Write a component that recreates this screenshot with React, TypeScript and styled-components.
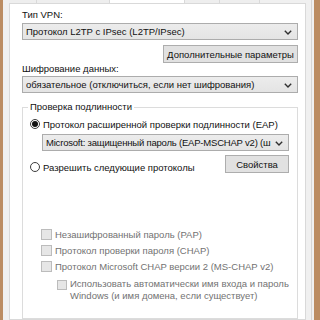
import React from "react";
import styled, { createGlobalStyle } from "styled-components";

const Global = createGlobalStyle`
  html, body { margin: 0; padding: 0; background: #f0f0f0; }
  * { box-sizing: border-box; }
`;

const Root = styled.div`
  display: flex;
  width: 320px;
  height: 320px;
  overflow: hidden;
  background: #f0f0f0;
  font-family: "Liberation Sans", Arial, sans-serif;
  font-size: 9.5px;
  color: #111111;
`;

const Wood = styled.div<{ $w: number }>`
  flex: none;
  width: ${(p) => p.$w}px;
  background: #bb8c62;
`;

const Gap = styled.div<{ $w: number }>`
  flex: none;
  width: ${(p) => p.$w}px;
  background: #f0f0f0;
`;

const Frame = styled.div`
  flex: none;
  width: 309px;
  padding-left: 6px;
  border-right: 1px solid #d6d6d6;
  display: flex;
  flex-direction: column;
`;

const TabStrip = styled.div`
  height: 3px;
  display: flex;
  flex: none;
`;

const Tab = styled.div<{ $w: number; $active?: boolean }>`
  width: ${(p) => p.$w}px;
  flex: none;
  border-right: 1px solid #d9d9d9;
  background: ${(p) => (p.$active ? "#ffffff" : "#eeeeee")};
`;

const TabPage = styled.div`
  width: 297px;
  flex: 1;
  background: #ffffff;
  border: 1px solid #d9d9d9;
  padding: 4px 7px 0 12px;
  display: flex;
  flex-direction: column;
`;

const Label = styled.div<{ $mt?: number }>`
  line-height: 12px;
  height: 13px;
  margin-top: ${(p) => p.$mt ?? 0}px;
  white-space: nowrap;
  padding-top: 1px;
`;

const Combo = styled.div<{ $mt?: number; $ml?: number }>`
  height: 17px;
  margin-top: ${(p) => p.$mt ?? 0}px;
  margin-left: ${(p) => p.$ml ?? 0}px;
  border: 1px solid #acacac;
  background: linear-gradient(#ececec, #e4e4e4);
  display: flex;
  align-items: center;
  padding: 1px 5px 0 3px;
  gap: 3px;
  line-height: 14px;
  min-width: 0;
`;

const ComboText = styled.span<{ $tight?: boolean }>`
  flex: 1;
  min-width: 0;
  white-space: nowrap;
  overflow: hidden;
  letter-spacing: ${(p) => (p.$tight ? "-0.2px" : "normal")};
`;

const Button = styled.div<{ $w: number; $mt?: number }>`
  width: ${(p) => p.$w}px;
  height: 18px;
  margin-top: ${(p) => p.$mt ?? 0}px;
  border: 1px solid #adadad;
  background: #e1e1e1;
  display: flex;
  align-items: center;
  justify-content: center;
  white-space: nowrap;
  line-height: 16px;
  padding-top: 1px;
`;

const RightRow = styled.div<{ $mt?: number }>`
  display: flex;
  justify-content: flex-end;
  margin-top: ${(p) => p.$mt ?? 0}px;
`;

const Group = styled.fieldset`
  margin: 8px 0 0 0;
  padding: 0;
  border: 1px solid #dcdcdc;
  flex: 1;
  min-width: 0;
`;

const Legend = styled.legend`
  margin-left: 5px;
  padding: 0 2px;
  line-height: 12px;
  white-space: nowrap;
`;

const GroupBody = styled.div`
  padding: 4px 8px 0 7px;
  display: flex;
  flex-direction: column;
`;

const RadioRow = styled.div<{ $mt?: number }>`
  display: flex;
  align-items: center;
  gap: 3px;
  height: 14px;
  margin-top: ${(p) => p.$mt ?? 0}px;
  white-space: nowrap;
`;

const RadioDot = styled.span<{ $checked?: boolean }>`
  width: 10px;
  height: 10px;
  flex: none;
  border-radius: 50%;
  border: 1px solid #3c3c3c;
  background: #ffffff;
  display: flex;
  align-items: center;
  justify-content: center;
  &::after {
    content: "";
    width: 6px;
    height: 6px;
    border-radius: 50%;
    background: ${(p) => (p.$checked ? "#111" : "transparent")};
  }
`;

const SplitRow = styled.div<{ $mt?: number }>`
  display: flex;
  justify-content: space-between;
  align-items: flex-start;
  margin-top: ${(p) => p.$mt ?? 0}px;
`;

const CheckRow = styled.div<{ $mt?: number; $ml: number }>`
  display: flex;
  align-items: flex-start;
  gap: 3px;
  margin-top: ${(p) => p.$mt ?? 0}px;
  margin-left: ${(p) => p.$ml}px;
  color: #727272;
  line-height: 12px;
`;

const CheckBox = styled.span<{ $size: number; $mt: number }>`
  width: ${(p) => p.$size}px;
  height: ${(p) => p.$size}px;
  margin-top: ${(p) => p.$mt}px;
  flex: none;
  border: 1px solid #bcbcbc;
  background: #e6e6e6;
`;

const CheckText = styled.span`
  white-space: nowrap;
  padding-top: 1px;
`;

const Chevron = () => (
  <svg width="8" height="5" viewBox="0 0 8 5" style={{ flex: "none" }}>
    <path d="M0.8 0.8 L4 4 L7.2 0.8" fill="none" stroke="#303030" strokeWidth="1.4" />
  </svg>
);

export default function App() {
  return (
    <Root>
      <Global />
      <Wood $w={3} />
      <Frame>
        <TabStrip>
          <Tab $w={28} />
          <Tab $w={73} />
          <Tab $w={75} $active />
          <Tab $w={35} />
          <Tab $w={40} />
        </TabStrip>
        <TabPage>
          <Label>Тип VPN:</Label>
          <Combo $mt={2}>
            <ComboText>Протокол L2TP с IPsec (L2TP/IPsec)</ComboText>
            <Chevron />
          </Combo>
          <RightRow $mt={5}>
            <Button $w={135}>Дополнительные параметры</Button>
          </RightRow>
          <Label $mt={-1}>Шифрование данных:</Label>
          <Combo $mt={1}>
            <ComboText>обязательное (отключиться, если нет шифрования)</ComboText>
            <Chevron />
          </Combo>
          <Group>
            <Legend>Проверка подлинности</Legend>
            <GroupBody>
              <RadioRow>
                <RadioDot $checked />
                <span>Протокол расширенной проверки подлинности (EAP)</span>
              </RadioRow>
              <Combo $mt={3} $ml={12}>
                <ComboText $tight>Microsoft: защищенный пароль (EAP-MSCHAP v2) (ш</ComboText>
                <Chevron />
              </Combo>
              <SplitRow $mt={4}>
                <RadioRow $mt={5}>
                  <RadioDot />
                  <span>Разрешить следующие протоколы</span>
                </RadioRow>
                <Button $w={64}>Свойства</Button>
              </SplitRow>
              <CheckRow $mt={54} $ml={11}>
                <CheckBox $size={11} $mt={1} />
                <CheckText>Незашифрованный пароль (PAP)</CheckText>
              </CheckRow>
              <CheckRow $mt={3} $ml={11}>
                <CheckBox $size={11} $mt={1} />
                <CheckText>Протокол проверки пароля (CHAP)</CheckText>
              </CheckRow>
              <CheckRow $mt={3} $ml={11}>
                <CheckBox $size={11} $mt={1} />
                <CheckText>Протокол Microsoft CHAP версии 2 (MS-CHAP v2)</CheckText>
              </CheckRow>
              <CheckRow $mt={4} $ml={27}>
                <CheckBox $size={10} $mt={3} />
                <CheckText>
                  Использовать автоматически имя входа и пароль
                  <br />
                  Windows (и имя домена, если существует)
                </CheckText>
              </CheckRow>
            </GroupBody>
          </Group>
        </TabPage>
      </Frame>
      <Gap $w={2} />
      <Wood $w={6} />
    </Root>
  );
}
